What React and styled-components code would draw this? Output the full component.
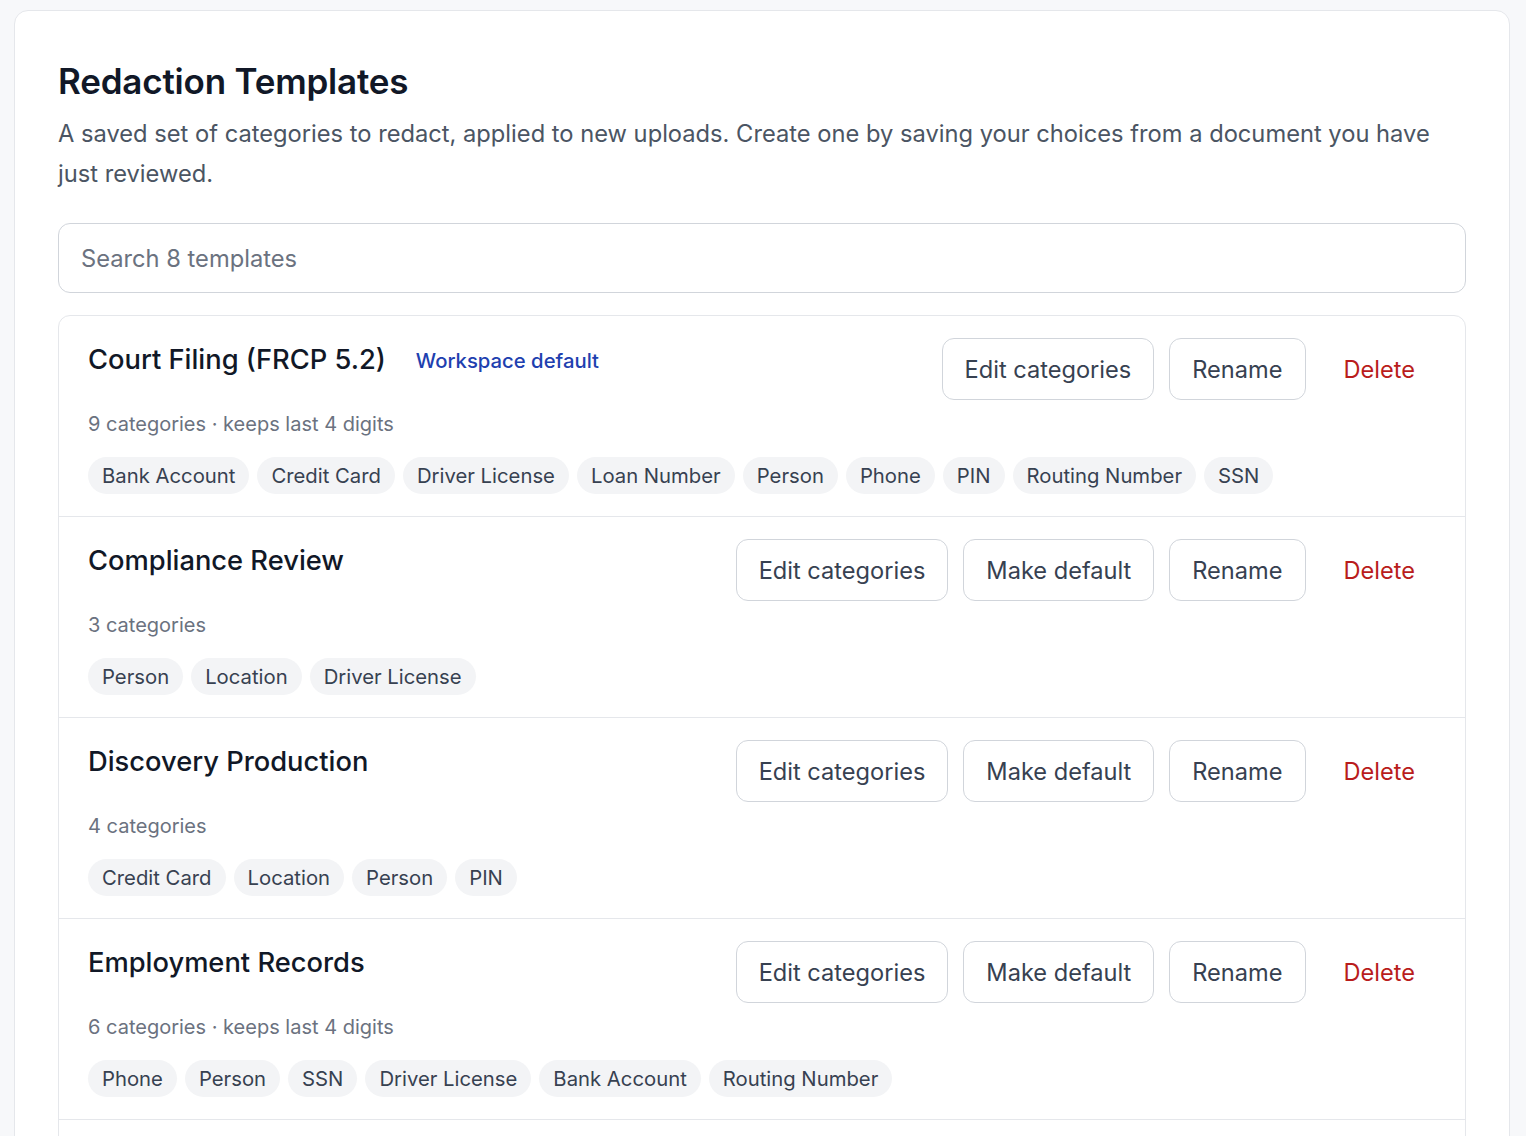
import React from 'react';
import styled, { createGlobalStyle } from 'styled-components';

const templates = [
  {
    name: 'Court Filing (FRCP 5.2)',
    isDefault: true,
    keepsLast4: true,
    categories: ['Bank Account', 'Credit Card', 'Driver License', 'Loan Number', 'Person', 'Phone', 'PIN', 'Routing Number', 'SSN'],
  },
  {
    name: 'Compliance Review',
    categories: ['Person', 'Location', 'Driver License'],
  },
  {
    name: 'Discovery Production',
    categories: ['Credit Card', 'Location', 'Person', 'PIN'],
  },
  {
    name: 'Employment Records',
    keepsLast4: true,
    categories: ['Phone', 'Person', 'SSN', 'Driver License', 'Bank Account', 'Routing Number'],
  },
  {
    name: 'Insurance Claims',
    categories: ['Person', 'Phone', 'Location', 'SSN'],
  },
  {
    name: 'Loan Application',
    keepsLast4: true,
    categories: ['Bank Account', 'Loan Number', 'Routing Number', 'SSN', 'Person'],
  },
  {
    name: 'Medical Records',
    categories: ['Person', 'Phone', 'Location'],
  },
  {
    name: 'Public Release',
    categories: ['Person', 'Phone', 'Location', 'SSN', 'Credit Card'],
  },
];

const App = () => {
  return (
    <Page>
      <GlobalStyle />
      <Card>
        <Title>Redaction Templates</Title>
        <Description>
          A saved set of categories to redact, applied to new uploads. Create one by saving your choices from a document you have just reviewed.
        </Description>
        <Search placeholder={`Search ${templates.length} templates`} />
        <List>
          {templates.map((t) => (
            <Row key={t.name}>
              <Header>
                <Info>
                  <NameLine>
                    <Name>{t.name}</Name>
                    {t.isDefault && <Badge>Workspace default</Badge>}
                  </NameLine>
                  <Meta>
                    {t.categories.length} categories{t.keepsLast4 ? ' · keeps last 4 digits' : ''}
                  </Meta>
                </Info>
                <Actions>
                  <Button>Edit categories</Button>
                  {!t.isDefault && <Button>Make default</Button>}
                  <Button>Rename</Button>
                  <Button danger>Delete</Button>
                </Actions>
              </Header>
              <Chips>
                {t.categories.map((c) => (
                  <Chip key={c}>{c}</Chip>
                ))}
              </Chips>
            </Row>
          ))}
        </List>
      </Card>
    </Page>
  );
};

export default App;

const GlobalStyle = createGlobalStyle`
body {
    margin: 0;
    background: #f7f8fa;
    font-family: Inter, "Noto Sans", "Liberation Sans", sans-serif;
    color: #111827;
}
* {
    box-sizing: border-box;
}
`;

const Page = styled.div`
padding: 10px 16px 10px 14px;
`;

const Card = styled.div`
background: #ffffff;
border: 1px solid #e5e7eb;
border-radius: 14px;
padding: 48px 43px 40px 43px;
`;

const Title = styled.h1`
margin: 0;
font-size: 35px;
line-height: 44px;
font-weight: 600;
color: #111827;
letter-spacing: -0.2px;
`;

const Description = styled.p`
margin: 11px 0 0 0;
font-size: 23.7px;
line-height: 40px;
color: #4b5563;
`;

const Search = styled.input`
display: block;
width: 100%;
margin-top: 29px;
height: 70px;
border: 1px solid #d1d5db;
border-radius: 12px;
padding: 0 22px;
font-family: inherit;
font-size: 23.7px;
color: #111827;
background: #fff;
outline: none;

&::placeholder {
    color: #6b7280;
}
`;

const List = styled.div`
margin-top: 22px;
border: 1px solid #e5e7eb;
border-radius: 12px;
overflow: hidden;
`;

const Row = styled.div`
padding: 22px 27px 22px 29px;
border-bottom: 1px solid #e5e7eb;

&:last-child {
    border-bottom: none;
}
`;

const Header = styled.div`
display: flex;
justify-content: space-between;
align-items: flex-start;
gap: 24px;
`;

const Info = styled.div`
display: flex;
flex-direction: column;
min-width: 0;
`;

const NameLine = styled.div`
display: flex;
align-items: center;
gap: 30px;
height: 44px;
`;

const Name = styled.h2`
margin: 0;
font-size: 27.3px;
line-height: 44px;
font-weight: 500;
color: #111827;
`;

const Badge = styled.span`
font-size: 20.3px;
font-weight: 500;
color: #1e40af;
`;

const Meta = styled.div`
margin-top: 26px;
font-size: 20px;
line-height: 32px;
color: #6b7280;
`;

const Actions = styled.div`
display: flex;
gap: 15px;
flex-shrink: 0;
`;

const Button = styled.button`
height: 62px;
padding: 0 22px;
border: 1px solid ${(p) => (p.danger ? 'transparent' : '#d1d5db')};
border-radius: 12px;
background: #ffffff;
font-family: inherit;
font-size: 23.6px;
color: ${(p) => (p.danger ? '#b91c1c' : '#374151')};
cursor: pointer;
`;

const Chips = styled.div`
display: flex;
flex-wrap: wrap;
gap: 8px;
margin-top: 17px;
`;

const Chip = styled.span`
display: inline-flex;
align-items: center;
height: 37px;
padding: 0 14px;
border-radius: 999px;
background: #f3f4f6;
font-size: 20.3px;
color: #374151;
`;
